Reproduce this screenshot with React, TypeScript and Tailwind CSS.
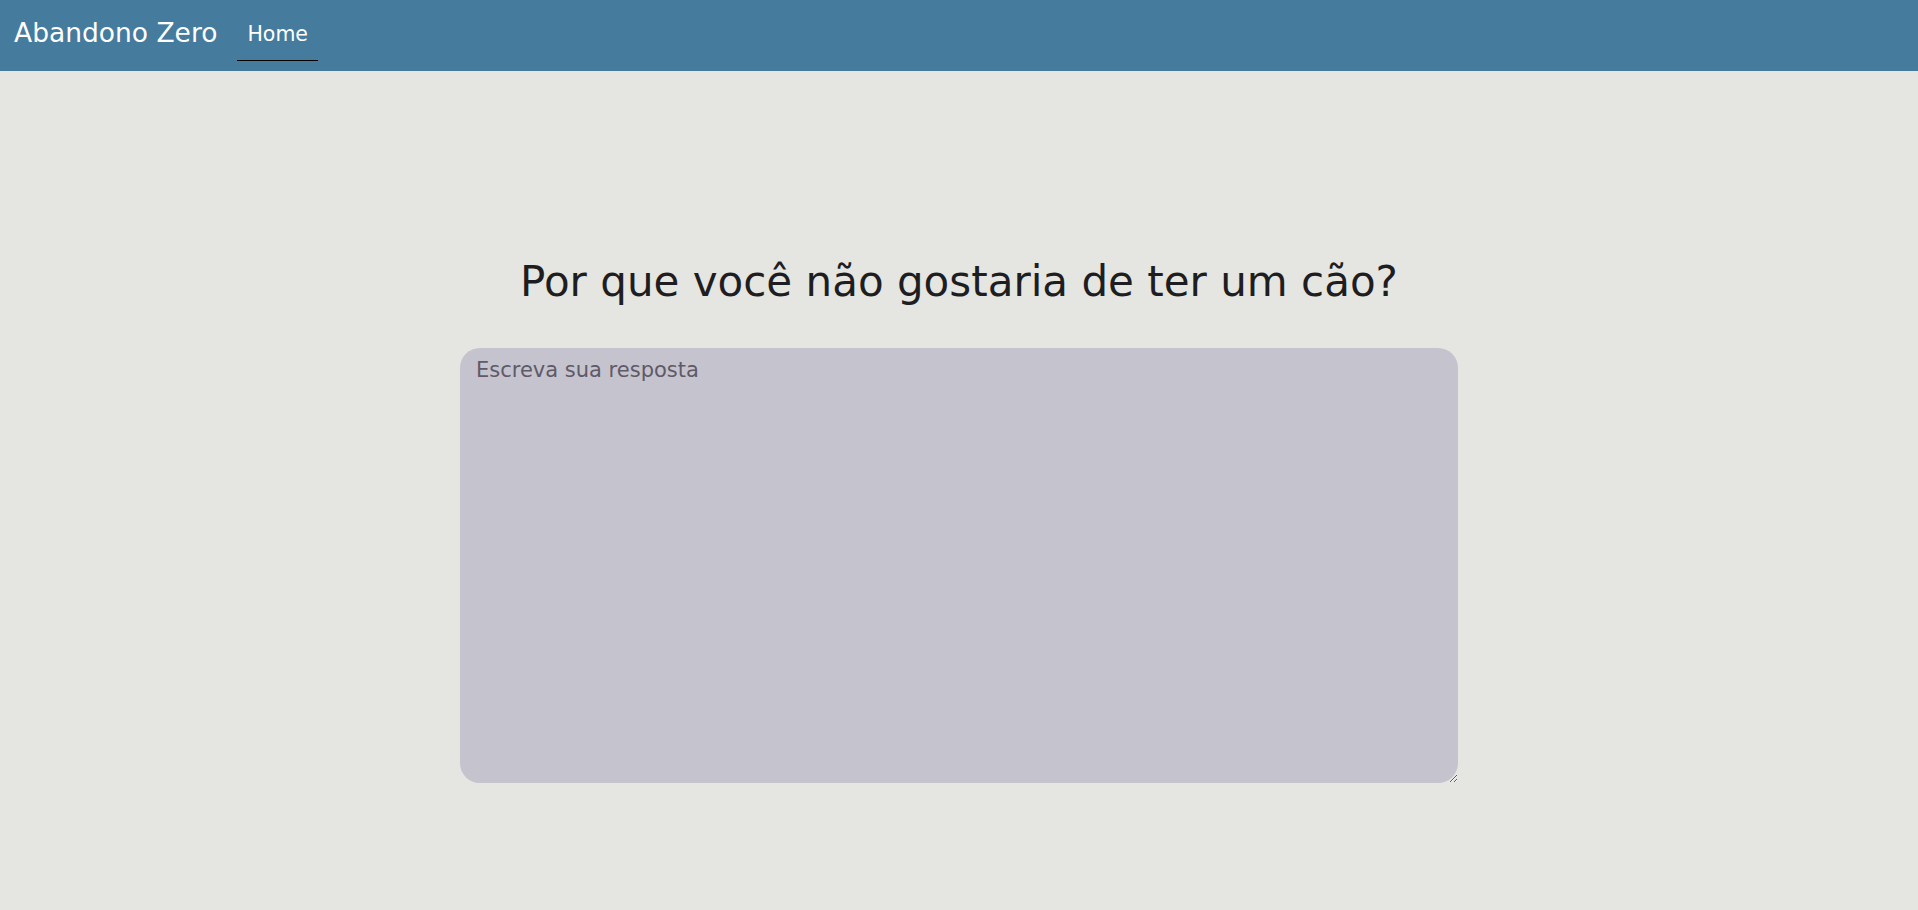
import React from "react";

export default function App() {
  const font = { fontFamily: '"DejaVu Sans", "Noto Sans", sans-serif' };
  return (
    <div className="min-h-[910px] w-full bg-[#e5e6e1]" style={font}>
      <nav className="h-[71px] bg-[#457b9d] flex items-center pl-[14px]">
        <span className="text-[26.5px] text-white leading-none -mt-[4px]">Abandono Zero</span>
        <div className="ml-[20px] h-full flex flex-col justify-center relative">
          <span className="px-[10px] text-[20.5px] text-white leading-none -mt-[3px]">Home</span>
          <div className="absolute left-0 right-0 top-[60px] h-px bg-black" />
        </div>
      </nav>
      <main className="flex flex-col items-center pt-[186px]">
        <h1 className="text-[42px] leading-[50px] text-[#1e1e22]">Por que você não gostaria de ter um cão?</h1>
        <textarea
          placeholder="Escreva sua resposta"
          className="mt-[41px] w-[998px] h-[435px] rounded-[20px] bg-[#c5c3ce] px-[16px] py-[8px] text-[21px] leading-[28px] text-[#1e1e22] placeholder:text-[#5f5a66] outline-none"
          style={font}
        />
      </main>
    </div>
  );
}
